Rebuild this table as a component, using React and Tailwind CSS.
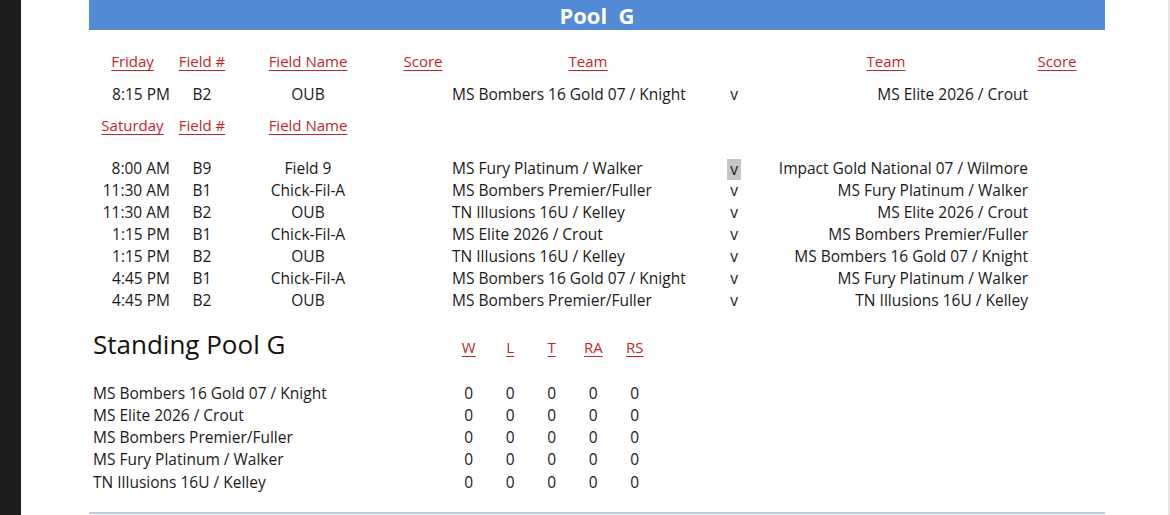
import React from 'react';

const friday = [{ time: '8:15 PM', field: 'B2', name: 'OUB', home: 'MS Bombers 16 Gold 07 / Knight', away: 'MS Elite 2026 / Crout' }];

const saturday = [
  { time: '8:00 AM', field: 'B9', name: 'Field 9', home: 'MS Fury Platinum / Walker', away: 'Impact Gold National 07 / Wilmore', mark: true },
  { time: '11:30 AM', field: 'B1', name: 'Chick-Fil-A', home: 'MS Bombers Premier/Fuller', away: 'MS Fury Platinum / Walker' },
  { time: '11:30 AM', field: 'B2', name: 'OUB', home: 'TN Illusions 16U / Kelley', away: 'MS Elite 2026 / Crout' },
  { time: '1:15 PM', field: 'B1', name: 'Chick-Fil-A', home: 'MS Elite 2026 / Crout', away: 'MS Bombers Premier/Fuller' },
  { time: '1:15 PM', field: 'B2', name: 'OUB', home: 'TN Illusions 16U / Kelley', away: 'MS Bombers 16 Gold 07 / Knight' },
  { time: '4:45 PM', field: 'B1', name: 'Chick-Fil-A', home: 'MS Bombers 16 Gold 07 / Knight', away: 'MS Fury Platinum / Walker' },
  { time: '4:45 PM', field: 'B2', name: 'OUB', home: 'MS Bombers Premier/Fuller', away: 'TN Illusions 16U / Kelley' },
];

const standings = [
  'MS Bombers 16 Gold 07 / Knight',
  'MS Elite 2026 / Crout',
  'MS Bombers Premier/Fuller',
  'MS Fury Platinum / Walker',
  'TN Illusions 16U / Kelley',
];

const Head = ({ children }) => (
  <span className="text-[15px] text-[#c0262c] underline underline-offset-[3px] decoration-[1px]">{children}</span>
);

const HeaderRow = ({ day, full }) => (
  <div className="flex h-[22px] items-center whitespace-nowrap">
    <div className="w-[87px] text-center"><Head>{day}</Head></div>
    <div className="w-[52px] text-center"><Head>Field #</Head></div>
    <div className="w-[160px] text-center"><Head>Field Name</Head></div>
    {full && (
      <>
        <div className="w-[64px] pl-[6px] text-center"><Head>Score</Head></div>
        <div className="w-[272px] text-center"><Head>Team</Head></div>
        <div className="w-[20px]" />
        <div className="w-[284px] text-center"><Head>Team</Head></div>
        <div className="w-[58px] text-center"><Head>Score</Head></div>
      </>
    )}
  </div>
);

const GameRow = ({ g }) => (
  <div className="flex h-[22px] items-center whitespace-nowrap">
    <div className="w-[87px] pr-[6px] text-right">{g.time}</div>
    <div className="w-[52px] text-center">{g.field}</div>
    <div className="w-[160px] text-center">{g.name}</div>
    <div className="w-[64px]" />
    <div className="w-[272px]">{g.home}</div>
    <div className="flex w-[20px] justify-center">
      <span className={g.mark ? 'bg-[#c6c6c6] px-[3px] leading-[21px]' : ''}>v</span>
    </div>
    <div className="w-[284px] text-right">{g.away}</div>
  </div>
);

export default function App() {
  return (
    <div
      className="flex h-[515px] w-[1170px] overflow-hidden bg-white text-[15.5px] text-[#1a1a1a]"
      style={{ fontFamily: '"Open Sans", "Noto Sans", sans-serif' }}
    >
      <div className="w-[21px] shrink-0 bg-[#1c1c1e]" />
      <div className="flex-1">
        <div className="ml-[68px] w-[1016px]">
          <div className="flex h-[30px] items-center justify-center bg-[#528bd5] text-[22px] font-bold text-white whitespace-pre">
            Pool  G
          </div>

          <div className="mt-[21px]"><HeaderRow day="Friday" full /></div>
          <div className="mt-[11px]">
            {friday.map((g, i) => <GameRow key={i} g={g} />)}
          </div>
          <div className="mt-[9px]"><HeaderRow day="Saturday" /></div>
          <div className="mt-[21px]">
            {saturday.map((g, i) => <GameRow key={i} g={g} />)}
          </div>

          <div className="mt-[17px] flex h-[30px] items-center">
            <div className="w-[359px] pl-[4px] text-[26px] text-[#111]">Standing Pool G</div>
            <div className="flex pt-[8px]">
              {['W', 'L', 'T', 'RA', 'RS'].map((h) => (
                <div key={h} className="w-[41.5px] text-center"><Head>{h}</Head></div>
              ))}
            </div>
          </div>

          <div className="mt-[23px]">
            {standings.map((t) => (
              <div key={t} className="flex h-[22.25px] items-center whitespace-nowrap">
                <div className="w-[359px] pl-[4px]">{t}</div>
                {[0, 1, 2, 3, 4].map((n) => (
                  <div key={n} className="w-[41.5px] text-center">0</div>
                ))}
              </div>
            ))}
          </div>

          <div className="mt-[19px] h-[2px] bg-[#b9cbe8]" />
        </div>
      </div>
      <div className="w-[2px] shrink-0 bg-[#e6e6e6]" />
    </div>
  );
}
